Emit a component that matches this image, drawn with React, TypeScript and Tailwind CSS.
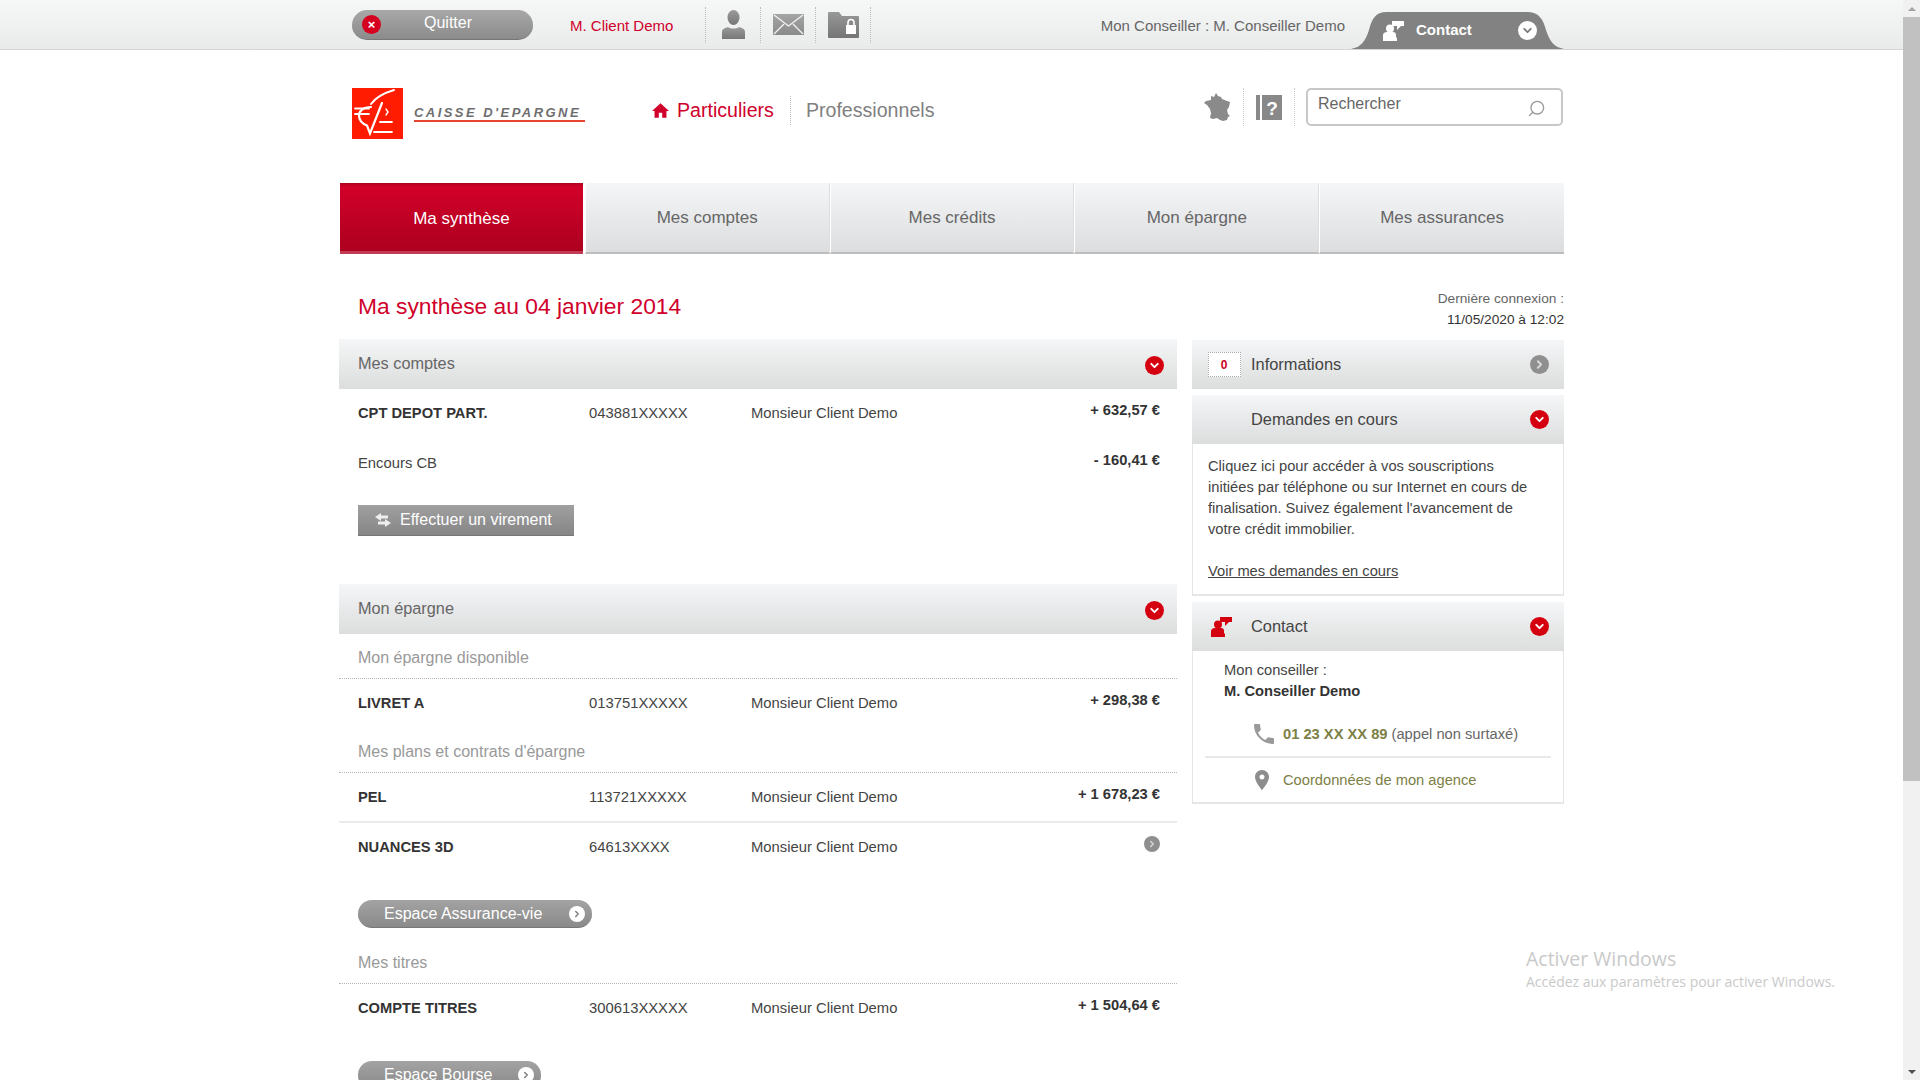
import { ChevronDown, ChevronRight, Search } from "lucide-react";

const row = [
  { label: "CPT DEPOT PART.", num: "043881XXXXX", amount: "+ 632,57 €" },
];

function Round({ tone, dir = "down", size = 19 }: { tone: "red" | "gray" | "white"; dir?: "down" | "right"; size?: number }) {
  const bg = tone === "red" ? "bg-[#d5000f]" : tone === "gray" ? "bg-[#8f8f8f]" : "bg-white";
  const fg = tone === "white" ? "text-[#7d7d7d]" : tone === "gray" ? "text-[#d8d8d8]" : "text-white";
  const Icon = dir === "down" ? ChevronDown : ChevronRight;
  return (
    <span className={`flex shrink-0 items-center justify-center rounded-full ${bg} ${fg}`} style={{ width: size, height: size }}>
      <Icon size={size - 6} strokeWidth={3.5} />
    </span>
  );
}

function PanelHeader({ title, tall = false }: { title: string; tall?: boolean }) {
  return (
    <div className="flex h-[50px] items-center justify-between bg-gradient-to-b from-[#f4f6f7] to-[#dcdddd] pl-[19px] pr-[13px]">
      <span className={`pb-[2px] text-[16.3px] text-[#666] ${tall ? "leading-6" : ""}`}>{title}</span>
      <span className="pt-[3px]"><Round tone="red" /></span>
    </div>
  );
}

function AccountRow({ label, num, amount, bold = true, end }: { label: string; num?: string; amount?: string; bold?: boolean; end?: boolean }) {
  return (
    <div className="flex h-[48px] items-center pl-[19px] pr-[17px] text-[14.8px] text-[#444]">
      <span className={`w-[231px] shrink-0 ${bold ? "font-bold text-[#333] text-[14.7px]" : ""}`}>{label}</span>
      <span className="w-[162px] shrink-0">{num}</span>
      <span>{num ? "Monsieur Client Demo" : ""}</span>
      <span className="ml-auto pb-[5px] text-[14.7px] font-bold text-[#333]">{amount}</span>
      {end && <span className="ml-auto pb-[6px]"><Round tone="gray" dir="right" size={16} /></span>}
    </div>
  );
}

function SubTitle({ title, className }: { title: string; className: string }) {
  return (
    <div className={`border-b border-dotted border-[#b5b5b5] pb-[10px] pl-[19px] text-[16px] leading-[20px] text-[#999] ${className}`}>
      {title}
    </div>
  );
}

function Pill({ label, width, className }: { label: string; width: string; className: string }) {
  return (
    <div className={`ml-[19px] flex h-[28px] items-center justify-between rounded-full border-b border-[#777] bg-gradient-to-b from-[#a3a3a3] to-[#8a8a8a] pl-[26px] pr-[7px] text-[16px] text-white ${width} ${className}`}>
      <span>{label}</span>
      <Round tone="white" dir="right" size={16} />
    </div>
  );
}

function SideHeader({ title, children, tone }: { title: string; children?: React.ReactNode; tone: "red" | "gray" }) {
  return (
    <div className="flex h-[49px] items-center bg-gradient-to-b from-[#f4f6f7] to-[#dcdddd]">
      <div className="flex w-[59px] shrink-0 justify-center">{children}</div>
      <span className="text-[16.4px] text-[#444]">{title}</span>
      <span className="ml-auto pr-[15px]"><Round tone={tone} dir={tone === "red" ? "down" : "right"} /></span>
    </div>
  );
}

function ContactIcon({ className }: { className: string }) {
  return (
    <svg viewBox="0 0 21 20" className={className} fill="currentColor">
      <circle cx="7" cy="7.5" r="4" />
      <path d="M0 20v-6c0-2 2-3 4-3h6c2 0 3 1 3 3v2l1 1v3z" />
      <path d="M9 0h12v5h-3l-4 4v-4H9z" />
    </svg>
  );
}

function Logo() {
  return (
    <svg viewBox="0 0 51 51" className="h-[51px] w-[51px] shrink-0">
      <rect width="51" height="51" fill="#ff1c00" />
      <g fill="none" stroke="#fff" strokeLinecap="round">
        <path d="M42 2C32 5 24 9 19 16" strokeWidth="2" />
        <path d="M19 19C11 19 7 23 7 27.5s3 8 8 10l3 8L30 15" strokeWidth="2.2" />
        <path d="M3 20.5h14M3 26h14" strokeWidth="1.8" />
        <path d="M34 21l2 3-2 3" strokeWidth="1.4" />
        <path d="M28 34h12M22 44h18" strokeWidth="1.8" />
      </g>
    </svg>
  );
}

function IconPerson() {
  return (
    <svg viewBox="0 0 23 29" className="h-[29px] w-[23px]">
      <defs><linearGradient id="gp" x1="0" y1="0" x2="0" y2="1"><stop offset="0" stopColor="#9a9a9a" /><stop offset="1" stopColor="#777" /></linearGradient></defs>
      <ellipse cx="11.5" cy="7.5" rx="6" ry="7.5" fill="url(#gp)" />
      <path d="M0 29v-7c0-3 3-4 6-5 2 2 9 2 11 0 3 1 6 2 6 5v7z" fill="url(#gp)" />
    </svg>
  );
}

function IconMail() {
  return (
    <svg viewBox="0 0 31 21" className="h-[21px] w-[31px]">
      <defs><linearGradient id="gm" x1="0" y1="0" x2="0" y2="1"><stop offset="0" stopColor="#a5a5a5" /><stop offset="1" stopColor="#8a8a8a" /></linearGradient></defs>
      <rect width="31" height="21" fill="url(#gm)" />
      <path d="M1 1l14.5 11L30 1M1 20l10-10M30 20L20 10" fill="none" stroke="#f3f3f3" strokeWidth="1.3" />
    </svg>
  );
}

function IconFolder() {
  return (
    <svg viewBox="0 0 31 26" className="h-[26px] w-[31px]">
      <defs><linearGradient id="gf" x1="0" y1="0" x2="0" y2="1"><stop offset="0" stopColor="#989898" /><stop offset="1" stopColor="#757575" /></linearGradient></defs>
      <path d="M0 1q0-1 1-1h10l3 4h16q1 0 1 1v20q0 1-1 1H1q-1 0-1-1z" fill="url(#gf)" />
      <rect x="18" y="13" width="10" height="9" fill="#fff" />
      <path d="M20 13v-2.5a3 3 0 016 0V13" fill="none" stroke="#fff" strokeWidth="1.6" />
    </svg>
  );
}

function IconFrance() {
  return (
    <svg viewBox="0 0 28 28" className="h-[28px] w-[28px]">
      <path d="M12 0l2 3 3 1 1 2 5 2 3 1-1 5-2 3 1 4 2 2-2 1-1 3-4 1-3-1-3-2-4 1-3-1 1-5-1-4-3-4-3-2 2-2 5-1V3l3 1z" fill="#8a8a8a" />
    </svg>
  );
}

function IconHelp() {
  return (
    <svg viewBox="0 0 26 25" className="h-[25px] w-[26px]">
      <rect x="0" y="0" width="4" height="25" fill="#888" />
      <rect x="6" y="0" width="20" height="25" fill="#888" />
      <text x="16" y="20" textAnchor="middle" fontSize="19" fontWeight="700" fill="#fff" fontFamily="Liberation Sans">?</text>
    </svg>
  );
}

export default function App() {
  return (
    <div className="relative flex h-screen w-full overflow-hidden bg-white font-['Liberation_Sans',Arial,sans-serif]">
      <div className="min-w-0 flex-1">
        {/* top bar */}
        <div className="h-[50px] border-b border-[#d5d5d5] bg-gradient-to-b from-[#f6f7f7] to-[#e9eaea]">
          <div className="mx-auto flex h-full w-[1225px] items-center pl-[13px]">
            <div className="flex h-[30px] w-[181px] items-center rounded-full border-b border-[#777] bg-gradient-to-b from-[#a8a8a8] to-[#8b8b8b] pl-[10px] text-white">
              <span className="flex h-[19px] w-[19px] items-center justify-center rounded-full bg-[#d5001f] text-[13px] leading-none font-bold">×</span>
              <span className="ml-[43px] pb-[2px] text-[16px]">Quitter</span>
            </div>
            <span className="ml-[37px] w-[135px] pt-[4px] text-[15px] text-[#d0002b]">M. Client Demo</span>
            <div className="flex h-[36px] border-r border-dotted border-[#bbb]">
              <div className="flex w-[55px] items-center justify-center border-l border-dotted border-[#bbb]"><IconPerson /></div>
              <div className="flex w-[55px] items-center justify-center border-l border-dotted border-[#bbb]"><IconMail /></div>
              <div className="flex w-[55px] items-center justify-center border-l border-dotted border-[#bbb]"><IconFolder /></div>
            </div>
            <span className="ml-auto pt-[4px] text-[15px] text-[#666]">Mon Conseiller : M. Conseiller Demo</span>
            <div className="relative ml-[6px] flex h-[37px] w-[213px] items-center self-end">
              <svg viewBox="0 0 213 37" className="absolute inset-0 h-full w-full" preserveAspectRatio="none">
                <path d="M0 37C10 35 14 30 18 18 21 7 24 0 36 0H176C188 0 192 7 195 18 199 30 203 35 213 37Z" fill="#828282" />
              </svg>
              <ContactIcon className="relative ml-[32px] h-[20px] w-[21px] text-white" />
              <span className="relative ml-[12px] text-[15px] font-bold text-white">Contact</span>
              <span className="relative ml-auto mr-[27px]"><Round tone="white" /></span>
            </div>
          </div>
        </div>

        <div className="mx-auto w-[1225px]">
          {/* logo and search */}
          <div className="flex h-[133px] items-start pl-[13px] pt-[38px]">
            <div className="flex w-[300px]">
              <Logo />
              <div className="ml-[11px] mt-[19px] h-[15px] w-[171px] border-b-2 border-[#e8432f] text-[13px] leading-[12px] font-bold tracking-[2.45px] whitespace-nowrap text-[#6e6e6e] italic">CAISSE D'EPARGNE</div>
            </div>
            <div className="mt-[8px] flex h-[29px] items-center text-[19.6px]">
              <svg viewBox="2 3 20 17" className="h-[15px] w-[17px] fill-[#d0002b]"><path d="M10 20v-6h4v6h5v-8h3L12 3 2 12h3v8z" /></svg>
              <span className="ml-[8px] text-[#d0002b]">Particuliers</span>
              <span className="ml-[16px] h-full border-l border-dotted border-[#bbb]" />
              <span className="ml-[15px] text-[#808080]">Professionnels</span>
            </div>
            <div className="ml-auto flex h-[38px] items-center pr-px">
              <IconFrance />
              <span className="ml-[11px] h-full border-l border-dotted border-[#ccc]" />
              <span className="ml-[12px] flex"><IconHelp /></span>
              <span className="ml-[12px] h-full border-l border-dotted border-[#ccc]" />
              <div className="ml-[11px] flex h-[38px] w-[257px] items-center justify-between rounded-[5px] border-2 border-[#c8c8c8] bg-white pl-[10px] pr-[15px] text-[16px] text-[#666]">
                <span className="pb-[6px]">Rechercher</span>
                <Search size={19} strokeWidth={1.7} className="mt-[2px] -scale-x-100 text-[#999]" />
              </div>
            </div>
          </div>

          {/* tabs */}
          <div className="ml-px grid h-[71px] grid-cols-5 text-[17px]">
            <div className="relative flex items-center justify-center border-r-2 border-white bg-gradient-to-b from-[#d4002a] to-[#ab001e] text-white">
              <span className="absolute inset-x-0 top-0 h-[4px] bg-gradient-to-b from-[#ad001c] to-[#d4002a]" />
              <span className="absolute inset-x-0 bottom-0 h-[3px] bg-[#c33a55]" />
              Ma synthèse
            </div>
            {["Mes comptes", "Mes crédits", "Mon épargne", "Mes assurances"].map((t, i) => (
              <div key={t} className={`flex items-center justify-center border-b-2 border-l border-b-[#bdbdbd] border-l-white bg-gradient-to-b from-[#f4f6f7] to-[#dcdddf] text-[#666] ${i === 3 ? "rounded-tr-[3px]" : "border-r border-r-[#dedede]"}`}>
                {t}
              </div>
            ))}
          </div>

          {/* page title */}
          <div className="flex h-[85px] items-start justify-between pl-[19px] pt-[38px]">
            <h1 className="text-[22.8px] leading-[28px] text-[#d0002b]">Ma synthèse au 04 janvier 2014</h1>
            <div className="-mt-[4px] text-right text-[13.7px] leading-[21px]">
              <div className="text-[#666]">Dernière connexion :</div>
              <div className="text-[#333]">11/05/2020 à 12:02</div>
            </div>
          </div>

          {/* columns */}
          <div className="flex items-start gap-[15px]">
            <div className="w-[838px] shrink-0">
              <PanelHeader title="Mes comptes" />
              <AccountRow {...row[0]} />
              <div className="h-[2px]" />
              <AccountRow label="Encours CB" bold={false} amount="- 160,41 €" />
              <div className="ml-[19px] mt-[18px] flex h-[31px] w-[216px] items-center border-b border-[#777] bg-gradient-to-b from-[#a0a0a0] to-[#868686] pl-[17px] text-[16px] text-white">
                <svg viewBox="0 0 16 14" className="h-[14px] w-[16px] fill-[#eee]"><path d="M6 0L0 4l6 4V5.5h7v-3H6zM10 6v2.500H3v3h7V14l6-4z" /></svg>
                <span className="ml-[9px]">Effectuer un virement</span>
              </div>
              <div className="h-[48px]" />
              <PanelHeader title="Mon épargne" />
              <SubTitle title="Mon épargne disponible" className="mt-[14px]" />
              <AccountRow label="LIVRET A" num="013751XXXXX" amount="+ 298,38 €" />
              <SubTitle title="Mes plans et contrats d'épargne" className="mt-[15px]" />
              <AccountRow label="PEL" num="113721XXXXX" amount="+ 1 678,23 €" />
              <div className="h-[2px] bg-[#ebebeb]" />
              <AccountRow label="NUANCES 3D" num="64613XXXX" end />
              <Pill label="Espace Assurance-vie" width="w-[234px]" className="mt-[29px]" />
              <SubTitle title="Mes titres" className="mt-[25px]" />
              <AccountRow label="COMPTE TITRES" num="300613XXXXX" amount="+ 1 504,64 €" />
              <Pill label="Espace Bourse" width="w-[183px]" className="mt-[29px]" />
            </div>

            <div className="mt-px w-[372px] shrink-0">
              <SideHeader title="Informations" tone="gray">
                <span className="ml-[5px] flex h-[25px] w-[33px] items-center justify-center border border-dotted border-[#aaa] bg-white text-[12px] font-bold text-[#d0002b]">0</span>
              </SideHeader>

              <div className="mt-[6px]">
                <SideHeader title="Demandes en cours" tone="red" />
                <div className="h-[152px] border-x border-b-2 border-[#e6e6e6] pl-[15px] pt-[12px] text-[14.7px] leading-[21px] text-[#444]">
                  <p>
                    Cliquez ici pour accéder à vos souscriptions<br />
                    initiées par téléphone ou sur Internet en cours de<br />
                    finalisation. Suivez également l'avancement de<br />
                    votre crédit immobilier.
                  </p>
                  <a className="mt-[21px] block underline">Voir mes demandes en cours</a>
                </div>
              </div>

              <div className="mt-[6px]">
                <SideHeader title="Contact" tone="red">
                  <ContactIcon className="h-[20px] w-[21px] text-[#d5000f]" />
                </SideHeader>
                <div className="h-[153px] border-x border-b-2 border-[#e6e6e6] pt-[9px] text-[14.7px] leading-[21px] text-[#444]">
                  <div className="pl-[31px]">
                    Mon conseiller :
                    <div className="font-bold text-[#333]">M. Conseiller Demo</div>
                  </div>
                  <div className="mt-[21px] flex h-[22px] items-center pl-[61px]">
                    <svg viewBox="3 3 18 18" className="h-[20px] w-[20px] fill-[#999]"><path d="M6.620 10.790c1.440 2.830 3.760 5.140 6.590 6.590l2.200-2.200c.27-.27.67-.36 1.020-.24 1.120.37 2.330.57 3.570.57.55 0 1 .45 1 1V20c0 .55-.45 1-1 1-9.390 0-17-7.610-17-17 0-.55.45-1 1-1h3.500c.55 0 1 .45 1 1 0 1.250.2 2.450.57 3.570.11.35.03.74-.25 1.020l-2.200 2.200z" /></svg>
                    <span className="ml-[9px] font-bold text-[#7d8045]">01 23 XX XX 89</span>
                    <span className="ml-[4px] text-[#666]">(appel non surtaxé)</span>
                  </div>
                  <div className="mx-[12px] mt-[11px] border-t-2 border-[#e9e9e9]" />
                  <div className="mt-[11px] flex h-[22px] items-center pl-[62px]">
                    <svg viewBox="5 2 14 20" className="h-[20px] w-[14px] fill-[#8d8d8d]"><path d="M12 2C8.130 2 5 5.130 5 9c0 5.250 7 13 7 13s7-7.750 7-13c0-3.870-3.130-7-7-7zm0 9.500c-1.380 0-2.500-1.120-2.500-2.500s1.120-2.500 2.500-2.500 2.500 1.120 2.500 2.500-1.120 2.500-2.500 2.500z" /></svg>
                    <span className="ml-[14px] text-[#7d8045]">Coordonnées de mon agence</span>
                  </div>
                </div>
              </div>
            </div>
          </div>
        </div>
      </div>

      {/* scrollbar */}
      <div className="flex w-[17px] shrink-0 flex-col items-center bg-[#f1f1f1]">
        <div className="flex h-[17px] w-full items-center justify-center">
          <span className="h-0 w-0 border-x-[4px] border-b-[4px] border-x-transparent border-b-[#a3a3a3]" />
        </div>
        <div className="h-[764px] w-full bg-[#c1c1c1]" />
        <div className="mt-auto flex h-[17px] w-full items-center justify-center">
          <span className="h-0 w-0 border-x-[4px] border-t-[4px] border-x-transparent border-t-[#505050]" />
        </div>
      </div>

      {/* windows watermark */}
      <div className="pointer-events-none absolute left-[1526px] top-[945px] font-['Open_Sans',sans-serif] text-[#c9c9c9]">
        <div className="text-[19.5px] leading-[27px]">Activer Windows</div>
        <div className="text-[14px] leading-[20px] whitespace-nowrap">Accédez aux paramètres pour activer Windows.</div>
      </div>
    </div>
  );
}
